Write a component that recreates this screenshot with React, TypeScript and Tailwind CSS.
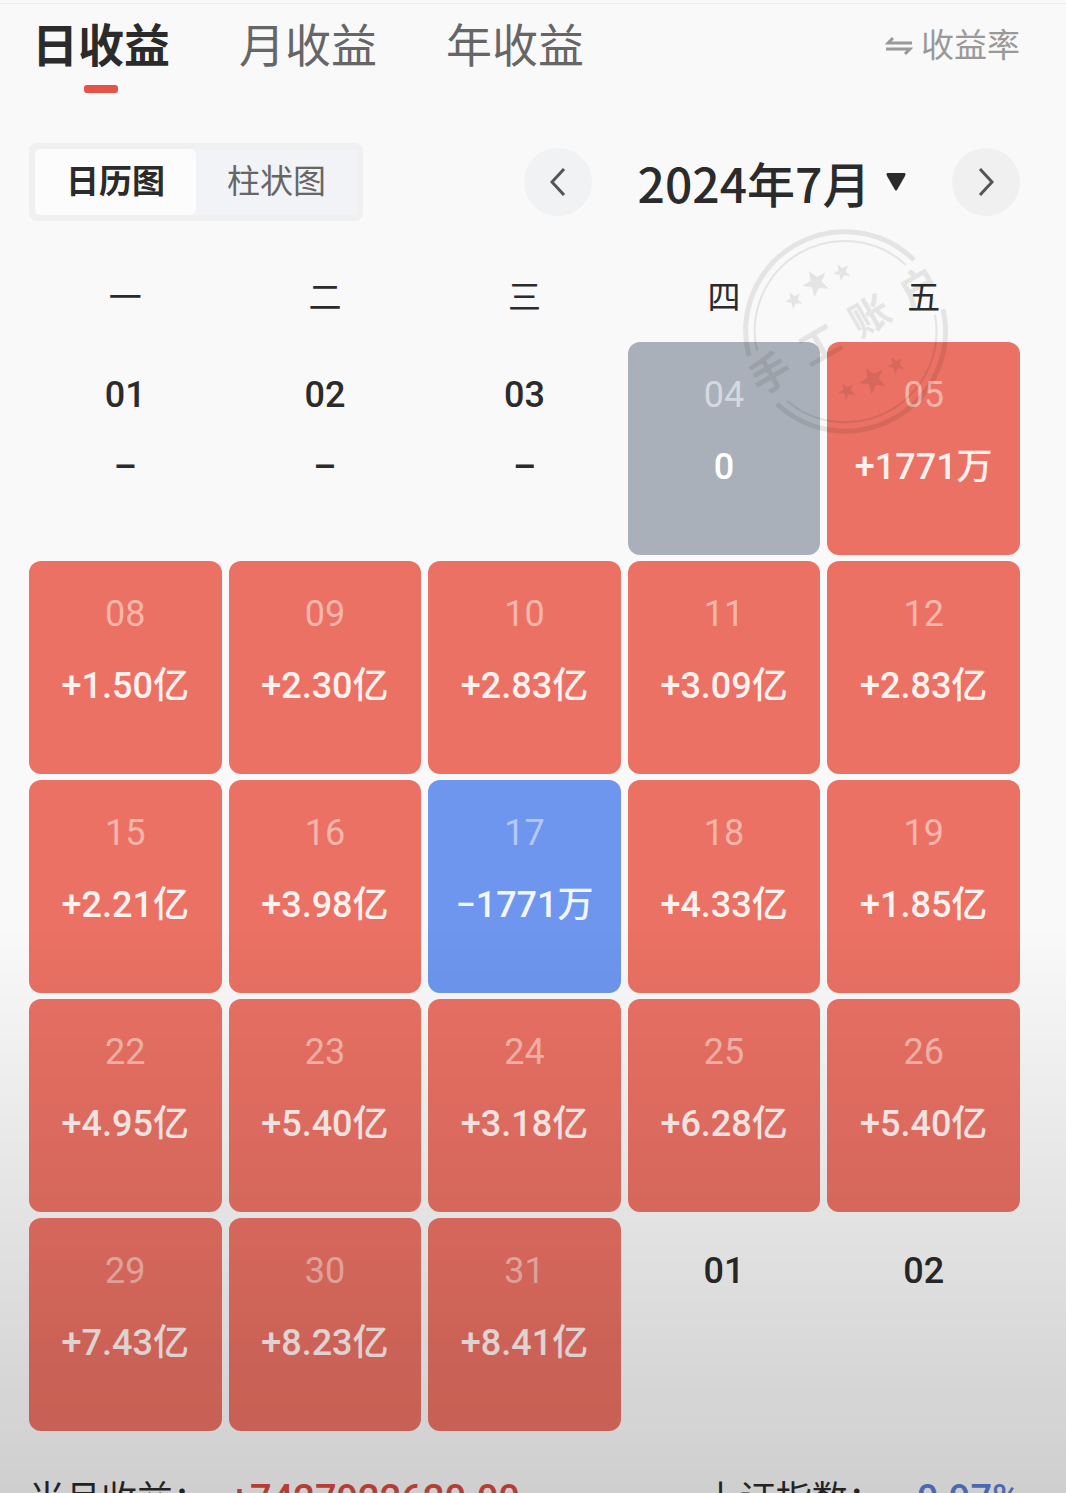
import React, { useState } from 'react';
import clsx from 'clsx';

type DayKind = 'up' | 'down' | 'flat' | 'none';

type Day = {
  date: string;
  value?: string;
  kind: DayKind;
};

const tabs = ['日收益', '月收益', '年收益'];
const views = ['日历图', '柱状图'];
const weekdays = ['一', '二', '三', '四', '五'];

const up = (date: string, value: string): Day => ({ date, value, kind: 'up' });

const weeks: Day[][] = [
  [
    { date: '01', value: '–', kind: 'none' },
    { date: '02', value: '–', kind: 'none' },
    { date: '03', value: '–', kind: 'none' },
    { date: '04', value: '0', kind: 'flat' },
    up('05', '+1771万')
  ],
  [up('08', '+1.50亿'), up('09', '+2.30亿'), up('10', '+2.83亿'), up('11', '+3.09亿'), up('12', '+2.83亿')],
  [
    up('15', '+2.21亿'),
    up('16', '+3.98亿'),
    { date: '17', value: '−1771万', kind: 'down' },
    up('18', '+4.33亿'),
    up('19', '+1.85亿')
  ],
  [up('22', '+4.95亿'), up('23', '+5.40亿'), up('24', '+3.18亿'), up('25', '+6.28亿'), up('26', '+5.40亿')],
  [
    up('29', '+7.43亿'),
    up('30', '+8.23亿'),
    up('31', '+8.41亿'),
    { date: '01', kind: 'none' },
    { date: '02', kind: 'none' }
  ]
];

const cellColors: Record<DayKind, string> = {
  up: 'bg-[#ea7164] text-[#fff1ee]',
  down: 'bg-[#6e96ee] text-[#f3f6ff]',
  flat: 'bg-[#a9b0b9] text-white',
  none: 'text-[#2b2b2b]'
};

const dateColors: Record<DayKind, string> = {
  up: 'text-[#f8b5ab]',
  down: 'text-[#b3c8f8]',
  flat: 'text-[#d5d9df]',
  none: 'font-medium'
};

const DayCell: React.FC<{ day: Day }> = ({ day }) => (
  <td className={clsx('h-[213px] rounded-xl p-0 pt-[31px] text-center align-top', cellColors[day.kind])}>
    <div className={clsx('h-11 text-[36px] leading-[44px]', dateColors[day.kind])}>{day.date}</div>
    {day.value && <div className="mt-7 h-11 text-[36px] leading-[44px] font-medium">{day.value}</div>}
  </td>
);

const Star: React.FC<{ x: number; y: number; size: number }> = ({ x, y, size }) => (
  <path
    transform={`translate(${x} ${y}) rotate(-30) scale(${size})`}
    d="M0 -1 L0.26 -0.34 L0.95 -0.31 L0.4 0.12 L0.59 0.81 L0 0.42 L-0.59 0.81 L-0.4 0.12 L-0.95 -0.31 L-0.26 -0.34 Z"
  />
);

const stampText = [
  { char: '手', x: -86 },
  { char: '工', x: -29 },
  { char: '账', x: 29 },
  { char: '户', x: 86 }
];

// Seal printed over manual accounts
const Stamp: React.FC = () => (
  <svg
    viewBox="-105 -105 210 210"
    className="pointer-events-none absolute -top-[41px] right-[70px] w-[210px] text-black opacity-[0.08]"
    fill="currentColor"
    aria-hidden="true"
  >
    <g fill="none" stroke="currentColor">
      <path strokeWidth="5" d="M-96 25 A99 99 0 0 1 69 -71" />
      <path strokeWidth="5" d="M98 -22 A100 100 0 0 1 -68 73" />
      <path strokeWidth="2" d="M-88 20 A90 90 0 0 1 61 -66" />
      <path strokeWidth="2" d="M90 -16 A91 91 0 0 1 -58 70" />
    </g>
    <Star x={-51} y={-31} size={9} />
    <Star x={-29} y={-48} size={14} />
    <Star x={-3} y={-59} size={9} />
    <Star x={2} y={60} size={9} />
    <Star x={28} y={49} size={14} />
    <Star x={51} y={34} size={9} />
    <g transform="rotate(-30)" fontSize="40" fontWeight="700" textAnchor="middle">
      {stampText.map(({ char, x }) => (
        <text key={char} x={x} y="14">
          {char}
        </text>
      ))}
    </g>
  </svg>
);

const App: React.FC = () => {
  const [tab, setTab] = useState(0);
  const [view, setView] = useState(0);

  return (
    <main className="min-h-screen overflow-hidden bg-[#f9f9f9] pt-[3px] pr-[46px] pl-[29px] font-[Roboto,'Noto_Sans_CJK_SC',sans-serif] text-[#2b2b2b]">
      <div className="-mr-[46px] -ml-[29px] h-px bg-[#ececec]" />
      <header className="flex items-start justify-between pt-[10px]">
        <nav className="flex gap-[69px] pl-[3px]">
          {tabs.map((label, i) => (
            <button
              key={label}
              type="button"
              onClick={() => setTab(i)}
              className={clsx(
                'flex flex-col items-center text-[46px] leading-[64px] whitespace-nowrap',
                i === tab ? 'font-bold' : 'text-[#666]'
              )}
            >
              {label}
              {i === tab && <span className="mt-[7px] h-2 w-[34px] rounded-[3px] bg-[#e55346]" />}
            </button>
          ))}
        </nav>
        <button type="button" className="flex items-center gap-2 text-[33px] leading-[64px] whitespace-nowrap text-[#999]">
          <svg viewBox="0 0 28 22" className="w-7" fill="none" stroke="currentColor" strokeWidth="3" aria-hidden="true">
            <path d="M27 8 H3 L8 3" />
            <path d="M1 14 H25 L20 19" />
          </svg>
          收益率
        </button>
      </header>

      <div className="mt-[50px] flex items-center justify-between">
        <div className="flex rounded-lg border-[6px] border-[#f0f0f0] bg-[#f2f3f6]">
          {views.map((label, i) => (
            <button
              key={label}
              type="button"
              onClick={() => setView(i)}
              className={clsx(
                'h-[66px] w-[161px] rounded-md text-[33px]',
                i === view ? 'bg-[#fcfcfc] font-bold' : 'text-[#666]'
              )}
            >
              {label}
            </button>
          ))}
        </div>
        <div className="flex w-[496px] items-center justify-between">
          <button type="button" aria-label="上个月" className="flex size-[68px] items-center justify-center rounded-full bg-[#f1f2f3]">
            <svg viewBox="0 0 16 28" className="w-4" fill="none" stroke="#555" strokeWidth="3" aria-hidden="true">
              <path d="M14 1 L2 14 L14 27" />
            </svg>
          </button>
          <button type="button" className="flex items-center gap-4 font-['Noto_Sans_CJK_SC',sans-serif] text-[48px] leading-[64px] font-medium whitespace-nowrap">
            2024年7月
            <svg viewBox="0 0 20 18" className="w-5" fill="currentColor" aria-hidden="true">
              <path d="M1 0 H19 Q20 1 19 3 L11 17 Q10 18 9 17 L1 3 Q0 1 1 0 Z" />
            </svg>
          </button>
          <button type="button" aria-label="下个月" className="flex size-[68px] items-center justify-center rounded-full bg-[#f0f0f0]">
            <svg viewBox="0 0 16 28" className="w-4" fill="none" stroke="#555" strokeWidth="3" aria-hidden="true">
              <path d="M2 1 L14 14 L2 27" />
            </svg>
          </button>
        </div>
      </div>

      <section className="relative mt-[46px]">
        <div className="-mx-[7px]">
          <table className="w-full table-fixed border-separate border-spacing-x-[7px] border-spacing-y-[6px]">
            <thead>
              <tr>
                {weekdays.map((name) => (
                  <th key={name} scope="col" className="h-[63px] p-0 pb-[14px] text-[33px] leading-10 font-normal">
                    {name}
                  </th>
                ))}
              </tr>
            </thead>
            <tbody>
              {weeks.map((week, i) => (
                <tr key={i}>
                  {week.map((day) => (
                    <DayCell key={day.date} day={day} />
                  ))}
                </tr>
              ))}
            </tbody>
          </table>
        </div>
        <Stamp />
      </section>

      <footer className="mt-[38px] flex justify-between text-[36px] leading-[48px] whitespace-nowrap">
        <p>
          当月收益：
          <span className="ml-5 text-[38px] font-medium text-[#dc4a3f]">+7427922620.00</span>
        </p>
        <p>
          上证指数：
          <span className="ml-5 text-[38px] font-medium text-[#5b7fd6]">-0.97%</span>
        </p>
      </footer>

      {/* Bottom shade over the whole screen */}
      <div className="pointer-events-none fixed inset-x-0 bottom-0 h-[38vh] bg-linear-to-b from-black/0 to-black/17" />
    </main>
  );
};

export default App;
